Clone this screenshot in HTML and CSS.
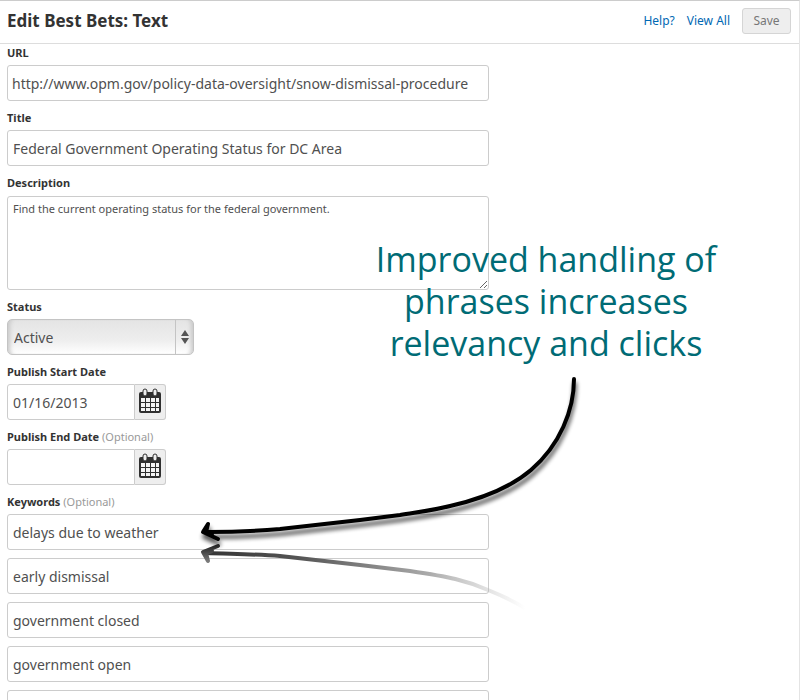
FILE: index.html
```html
<!DOCTYPE html>
<html lang="en">
<head>
<meta charset="utf-8">
<title>Edit Best Bets: Text</title>
<link rel="stylesheet" href="styles.css">
</head>
<body>
<svg class="defs" aria-hidden="true">
  <symbol id="calendar" viewBox="0 0 24 26">
    <rect x="1" y="4" width="22" height="21" rx="2" fill="#2f2f2f"/>
    <path d="M3 10h4v4H3zm5 0h4v4H8zm5 0h4v4h-4zm5 0h3v4h-3zM3 15h4v4H3zm5 0h4v4H8zm5 0h4v4h-4zm5 0h3v4h-3zM3 20h4v3H3zm5 0h4v3H8zm5 0h4v3h-4zm5 0h3v3h-3z" fill="#f4f4f4"/>
    <rect x="5" y="1" width="4" height="7" rx="2" fill="#eee" stroke="#2f2f2f"/>
    <rect x="15" y="1" width="4" height="7" rx="2" fill="#eee" stroke="#2f2f2f"/>
  </symbol>
</svg>
<div class="page">
  <header class="bar">
    <h1 class="title">Edit Best Bets: Text</h1>
    <nav class="actions">
      <a href="#help">Help?</a>
      <a href="#all">View All</a>
      <button class="save" type="submit" form="best-bet">Save</button>
    </nav>
  </header>
  <form class="form" id="best-bet">
    <div class="field">
      <label for="url">URL</label>
      <input class="text url" id="url" type="text" value="http://www.opm.gov/policy-data-oversight/snow-dismissal-procedure">
    </div>
    <div class="field">
      <label for="title">Title</label>
      <input class="text" id="title" type="text" value="Federal Government Operating Status for DC Area">
    </div>
    <div class="field">
      <label for="description">Description</label>
      <textarea class="text area" id="description">Find the current operating status for the federal government.</textarea>
    </div>
    <div class="field">
      <label for="status">Status</label>
      <div class="picker">
        <select class="select" id="status"><option>Active</option><option>Inactive</option></select>
        <svg class="arrows" viewBox="0 0 8 14" aria-hidden="true"><path d="M4 0l4 6H0zM0 8h8l-4 6z" fill="#555"/></svg>
      </div>
    </div>
    <div class="field">
      <label for="start">Publish Start Date</label>
      <div class="date">
        <input class="text" id="start" type="text" value="01/16/2013">
        <button class="cal" type="button" aria-label="Choose start date"><svg aria-hidden="true"><use href="#calendar"/></svg></button>
      </div>
    </div>
    <div class="field">
      <label for="end">Publish End Date <span class="optional">(Optional)</span></label>
      <div class="date">
        <input class="text" id="end" type="text">
        <button class="cal" type="button" aria-label="Choose end date"><svg aria-hidden="true"><use href="#calendar"/></svg></button>
      </div>
    </div>
    <div class="field">
      <label for="keyword">Keywords <span class="optional">(Optional)</span></label>
      <div class="keywords">
        <input class="text" id="keyword" type="text" value="delays due to weather">
        <input class="text" type="text" aria-label="Keyword 2" value="early dismissal">
        <input class="text" type="text" aria-label="Keyword 3" value="government closed">
        <input class="text" type="text" aria-label="Keyword 4" value="government open">
        <input class="text" type="text" aria-label="Keyword 5">
      </div>
    </div>
  </form>
  <p class="callout">Improved handling of<br>phrases increases<br>relevancy and clicks</p>
  <svg class="pointer" viewBox="190 370 400 250" aria-hidden="true">
    <defs>
      <filter id="soft" x="-10%" y="-10%" width="120%" height="120%"><feGaussianBlur stdDeviation="2"/></filter>
      <linearGradient id="fade" gradientUnits="userSpaceOnUse" x1="203" y1="0" x2="525" y2="0">
        <stop offset="0" stop-color="#333"/><stop offset=".3" stop-color="#555"/><stop offset=".7" stop-color="#aaa"/><stop offset="1" stop-color="#bbb" stop-opacity="0"/>
      </linearGradient>
      <linearGradient id="barb" gradientUnits="userSpaceOnUse" x1="0" y1="544" x2="0" y2="564">
        <stop offset="0" stop-color="#1c1c1c"/><stop offset="1" stop-color="#888"/>
      </linearGradient>
      <g id="stroke" fill="none" stroke-linecap="round" stroke-linejoin="round">
        <path d="M574 379C574 410 560 445 531 470C511 487 485 498 450 506C435 510 418 512 400 515L360 520L280 529Q245 532 207 532" stroke-width="4"/>
        <path d="M208 524L203 532L218 539M208 524L206 532L212 534" stroke-width="4"/>
      </g>
    </defs>
    <use href="#stroke" x="1" y="5" stroke="#000" opacity=".65" filter="url(#soft)"/>
    <g fill="none" stroke-linecap="round" stroke-linejoin="round">
      <path d="M206 553C230 554 255 554 280 556L360 565L410 571C450 577 465 580 488 590Q508 598 525 608" stroke="url(#fade)" stroke-width="4"/>
      <path d="M218 546L203 552L208 561L206 553L212 551" stroke="url(#barb)" stroke-width="4"/>
    </g>
    <use href="#stroke" stroke="#000"/>
  </svg>
</div>
</body>
</html>
```
FILE: styles.css
```css
* { box-sizing: border-box; }

body {
  margin: 0;
  background: #fff;
  color: #333;
  font-family: "Noto Sans", "Open Sans", sans-serif;
}

.defs { display: none; }

.page {
  position: relative;
  height: 100vh;
  overflow: hidden;
  border-top: 1px solid #ccc;
  border-right: 1px solid #e4e4e4;
}

.bar {
  display: flex;
  align-items: center;
  justify-content: space-between;
  height: 43px;
  padding: 0 8px 3px 7px;
  border-bottom: 1px solid #ddd;
}

.title {
  margin: 0;
  font-size: 17px;
  font-weight: 700;
}

.actions {
  display: flex;
  align-items: center;
  gap: 12px;
  font-size: 12px;
}

.actions a {
  color: #0068b3;
  text-decoration: none;
}

.save {
  width: 49px;
  height: 26px;
  padding: 0;
  border: 1px solid #d5d5d5;
  border-radius: 3px;
  background: #eee;
  color: #777;
  font: inherit;
}

.form {
  display: flex;
  flex-direction: column;
  gap: 9px;
  max-width: 489px;
  padding: 1px 0 0 7px;
}

.field label {
  display: block;
  font-size: 11px;
  font-weight: 700;
  line-height: 16px;
  padding-bottom: 4px;
}

.optional {
  color: #999;
  font-weight: 400;
}

.text {
  display: block;
  width: 100%;
  height: 36px;
  margin: 0;
  padding: 0 5px;
  border: 1px solid #ccc;
  border-radius: 3px;
  background: #fff;
  color: #505050;
  font: 14px "Noto Sans", "Open Sans", sans-serif;
}

.url { padding: 0 4px; }

.area {
  height: 94px;
  margin-top: 1px;
  padding: 4px 5px;
  font-size: 11px;
  line-height: 16px;
  resize: both;
}

.picker {
  position: relative;
  width: 187px;
}

.select {
  display: block;
  width: 100%;
  height: 36px;
  padding: 0 6px;
  border: 1px solid #c4c4c4;
  border-radius: 5px;
  appearance: none;
  background:
    linear-gradient(90deg, transparent 167px, #c4c4c4 167px, #c4c4c4 168px, transparent 168px),
    linear-gradient(#e4e4e4, #eee 60%, #fff);
  box-shadow: inset 5px 0 4px -3px #c8c8c8, inset -5px 0 4px -3px #c8c8c8;
  color: #505050;
  font: 14px "Noto Sans", "Open Sans", sans-serif;
}

.arrows {
  position: absolute;
  top: 11px;
  right: 5px;
  width: 8px;
  height: 14px;
  pointer-events: none;
}

.date {
  display: flex;
  width: 159px;
}

.date .text {
  flex: 1;
  min-width: 0;
  border-radius: 3px 0 0 3px;
}

.cal {
  display: flex;
  justify-content: center;
  width: 31px;
  height: 36px;
  padding: 3px 0 0;
  border: 1px solid #ccc;
  border-left: 0;
  border-radius: 0 3px 3px 0;
  background: #eee;
}

.cal svg {
  width: 24px;
  height: 26px;
}

.keywords {
  display: flex;
  flex-direction: column;
  gap: 8px;
}

.callout {
  position: absolute;
  top: 237px;
  left: 366px;
  width: 360px;
  margin: 0;
  color: #006b75;
  font: 34px/42px "Open Sans", "Noto Sans", sans-serif;
  text-align: center;
  white-space: nowrap;
}

.pointer {
  position: absolute;
  top: 369px;
  left: 190px;
  width: 400px;
  height: 250px;
  pointer-events: none;
}
```
